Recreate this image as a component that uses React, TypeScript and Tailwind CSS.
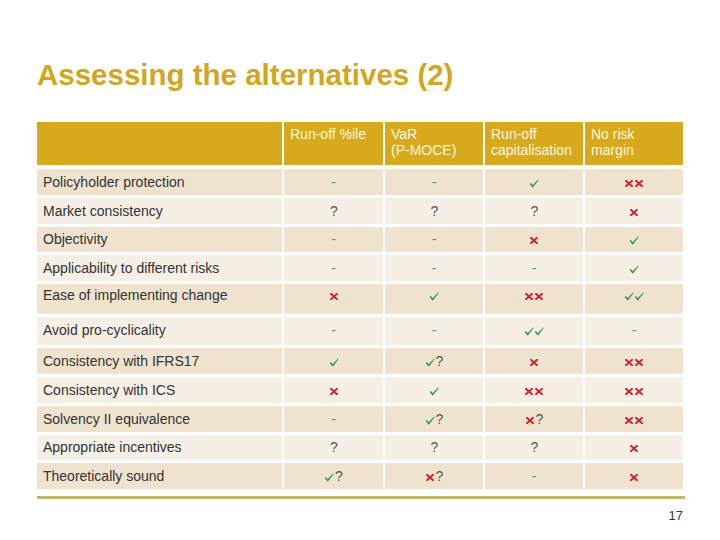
import React from "react";

const font = { fontFamily: '"Liberation Sans", Arial, sans-serif' };

type Row = { label: string; cells: string[]; h: string; pt: string };

const rows: Row[] = [
  { label: "Policyholder protection", cells: ["-", "-", "v", "xx"], h: "h-[26px]", pt: "pt-[5px]" },
  { label: "Market consistency", cells: ["?", "?", "?", "x"], h: "h-[26px]", pt: "pt-[5px]" },
  { label: "Objectivity", cells: ["-", "-", "x", "v"], h: "h-[25px]", pt: "pt-[4px]" },
  { label: "Applicability to different risks", cells: ["-", "-", "-", "v"], h: "h-[26px]", pt: "pt-[5px]" },
  { label: "Ease of implementing change", cells: ["x", "v", "xx", "vv"], h: "h-[30px]", pt: "pt-[3px]" },
  { label: "Avoid pro-cyclicality", cells: ["-", "-", "vv", "-"], h: "h-[28px]", pt: "pt-[5px]" },
  { label: "Consistency with IFRS17", cells: ["v", "v?", "x", "xx"], h: "h-[26px]", pt: "pt-[5px]" },
  { label: "Consistency with ICS", cells: ["x", "v", "xx", "xx"], h: "h-[26px]", pt: "pt-[5px]" },
  { label: "Solvency II equivalence", cells: ["-", "v?", "x?", "xx"], h: "h-[26px]", pt: "pt-[5px]" },
  { label: "Appropriate incentives", cells: ["?", "?", "?", "x"], h: "h-[25px]", pt: "pt-[4px]" },
  { label: "Theoretically sound", cells: ["v?", "x?", "-", "x"], h: "h-[26px]", pt: "pt-[5px]" },
];

const widths = ["w-[99px]", "w-[98px]", "w-[98px]", "w-[98px]"];

function Check() {
  return (
    <svg width="10" height="9" viewBox="0 0 10 9" className="inline-block">
      <path d="M0.6 5 L2 4.1 L3.6 6.2 L9.1 0.4 L9.7 0.9 L3.8 8.7 Z" fill="#2f9a48" />
    </svg>
  );
}

function Cross() {
  return (
    <svg width="8" height="7" viewBox="0 0 8 7" className="inline-block mx-[1px]">
      <path d="M1 0.8 L7 6.2 M7 0.8 L1 6.2" stroke="#d0222a" strokeWidth="1.9" strokeLinecap="square" />
    </svg>
  );
}

function Mark({ code }: { code: string }) {
  return (
    <span className="leading-[16px] whitespace-nowrap">
      {code.split("").map((c, i) => {
        if (c === "v") return <Check key={i} />;
        if (c === "x") return <Cross key={i} />;
        if (c === "-") return <span key={i} className="text-[#4f9a62]">-</span>;
        return <span key={i} className="text-[#555555] ml-[1px]">?</span>;
      })}
    </span>
  );
}

export default function App() {
  return (
    <div className="w-[720px] h-[540px] bg-white overflow-hidden pl-[37px]" style={font}>
      <h1 className="pt-[58px] text-[29.5px] leading-[34px] font-bold text-[#d4a520] whitespace-nowrap">
        Assessing the alternatives (2)
      </h1>

      <div className="mt-[30px] flex flex-col gap-y-[3px] text-[14px] leading-[16px]">
        <div className="flex gap-x-[2px] h-[43px] mb-[1px] text-[#fdf6dc]">
          <div className="w-[245px] bg-[#d6aa1c]" />
          {["Run-off %ile", "VaR (P-MOCE)", "Run-off capitalisation", "No risk margin"].map((t, i) => (
            <div key={t} className={`${widths[i]} bg-[#d6aa1c] pt-[4px] pl-[6px] pr-[4px]`}>
              {t === "VaR (P-MOCE)" ? (
                <>
                  VaR
                  <br />
                  (P-MOCE)
                </>
              ) : (
                t
              )}
            </div>
          ))}
        </div>

        {rows.map((r, ri) => {
          const bg = ri % 2 === 0 ? "bg-[#efe3d0]" : "bg-[#f6efe6]";
          return (
            <div key={r.label} className={`flex gap-x-[2px] ${r.h}`}>
              <div className={`w-[245px] ${bg} ${r.pt} pl-[6px] text-[#333333] whitespace-nowrap`}>{r.label}</div>
              {r.cells.map((c, ci) => (
                <div key={ci} className={`${widths[ci]} ${bg} ${r.pt} flex justify-center items-start`}>
                  <Mark code={c} />
                </div>
              ))}
            </div>
          );
        })}
      </div>

      <div className="mt-[7px] w-[648px] h-[3px] bg-[#c5b566]" />
      <div className="w-[646px] mt-[9px] text-right text-[13px] leading-[16px] text-[#333333]">17</div>
    </div>
  );
}
